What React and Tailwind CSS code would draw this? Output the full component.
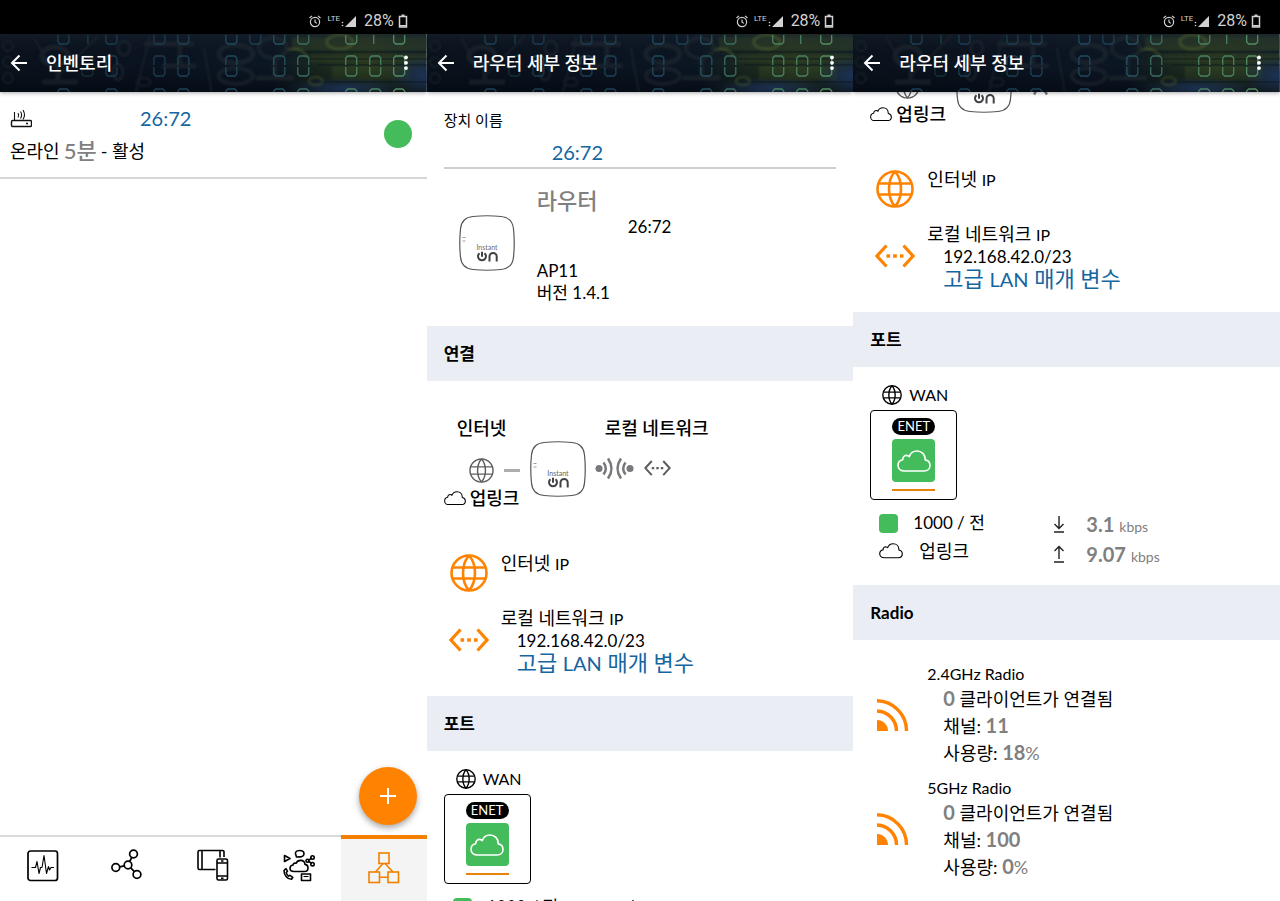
import React, { useLayoutEffect, useRef } from 'react';

const segmentDigits = [
  // x, rows that show a zero in that column
  { x: 57, top: true, mid: false, bottom: true, color: '#1d4256' },
  { x: 81, top: false, mid: true, bottom: false, color: '#162d3a' },
  { x: 105, top: true, mid: true, bottom: true, color: '#1b3d50' },
  { x: 153, top: true, mid: true, bottom: true, color: '#1b3d50' },
  { x: 177, top: true, mid: true, bottom: true, color: '#1d4256' },
  { x: 225, top: true, mid: true, bottom: true, color: '#21495c' },
  { x: 249, top: true, mid: false, bottom: false, color: '#1d4052' },
  { x: 273, top: true, mid: true, bottom: true, color: '#26525f' },
  { x: 297, top: true, mid: true, bottom: true, color: '#3b6c62' },
  { x: 345, top: true, mid: true, bottom: true, color: '#4a8062' },
  { x: 369, top: false, mid: true, bottom: true, color: '#4a8062' },
  { x: 393, top: true, mid: true, bottom: true, color: '#538c63' },
];

const HeaderArt = () => (
  <svg
    className="absolute inset-0 h-full w-full"
    viewBox="0 0 427 58"
    preserveAspectRatio="none"
    fill="none"
    aria-hidden="true"
  >
    <defs>
      <linearGradient id="art-base" x1="0" x2="1" y1="0" y2="0">
        <stop offset="0" stopColor="#0a121c" />
        <stop offset="0.35" stopColor="#0a1320" />
        <stop offset="0.64" stopColor="#0c1724" />
        <stop offset="0.74" stopColor="#1a281f" />
        <stop offset="0.86" stopColor="#27361f" />
        <stop offset="1" stopColor="#1c2a2c" />
      </linearGradient>
      <linearGradient id="art-shade" x1="0" x2="0" y1="0" y2="1">
        <stop offset="0" stopColor="#1a2430" stopOpacity="0.5" />
        <stop offset="0.5" stopColor="#050a12" stopOpacity="0" />
        <stop offset="1" stopColor="#03070f" stopOpacity="0.6" />
      </linearGradient>
      <radialGradient id="art-blue">
        <stop offset="0" stopColor="#1d3560" stopOpacity="0.8" />
        <stop offset="1" stopColor="#1d3560" stopOpacity="0" />
      </radialGradient>
      <filter id="art-soft">
        <feGaussianBlur stdDeviation="0.9" />
      </filter>
    </defs>
    <rect width="427" height="58" fill="url(#art-base)" />
    <g filter="url(#art-soft)">
      <rect x="292" y="3" width="137" height="13" fill="#3c4a24" opacity="0.55" />
      <rect x="310" y="20" width="119" height="8" fill="#35461f" opacity="0.45" />
      <rect x="332" y="32" width="78" height="14" fill="#3f5228" opacity="0.4" />
    </g>
    <rect width="427" height="58" fill="url(#art-shade)" />
    <ellipse cx="345" cy="54" rx="60" ry="11" fill="url(#art-blue)" />
    <ellipse cx="425" cy="42" rx="36" ry="20" fill="url(#art-blue)" />
    <path
      d="M292 18h135M305 25h122M318 31h109M310 48h117"
      stroke="#0b1820"
      strokeWidth="1"
      opacity="0.8"
    />
    <g stroke="#2a3238" opacity="0.42" filter="url(#art-soft)">
      <path d="M34 4l16 28M150 2l-14 56M204 14l8 44M98 2L56 44" strokeWidth="2" />
      <path d="M144 10h50M180 10v22M162 32h34M42 48h36M58 30v18" strokeWidth="5" />
      <ellipse cx="55" cy="22" rx="13" ry="9" strokeWidth="5" />
      <ellipse cx="236" cy="20" rx="17" ry="9" strokeWidth="5" />
      <ellipse cx="236" cy="42" rx="17" ry="8" strokeWidth="4" />
      <ellipse cx="273" cy="14" rx="14" ry="10" strokeWidth="4" />
      <path d="M256 44h38M275 26v18" strokeWidth="5" />
      <ellipse cx="124" cy="14" rx="6" ry="7" strokeWidth="3" />
      <ellipse cx="118" cy="38" rx="5" ry="8" strokeWidth="3" />
      <ellipse cx="8" cy="12" rx="5" ry="5" strokeWidth="2" />
      <ellipse cx="8" cy="28" rx="5" ry="5" strokeWidth="2" />
      <ellipse cx="8" cy="44" rx="5" ry="5" strokeWidth="2" />
      <ellipse cx="144" cy="48" rx="7" ry="4" strokeWidth="2" />
    </g>
    <g stroke="#5f7136" opacity="0.4" filter="url(#art-soft)">
      <ellipse cx="340" cy="8" rx="13" ry="7" strokeWidth="3" />
      <path d="M288 16q14 -4 20 8" strokeWidth="3" />
      <ellipse cx="316" cy="47" rx="7" ry="4" strokeWidth="2" />
    </g>
    <g strokeWidth="1.3">
      {segmentDigits.map((d) => (
        <g key={d.x} stroke={d.color}>
          {d.top && <path d={`M${d.x + 1} 1v7l2 2h7l2 -2v-7`} />}
          {d.mid && (
            <path
              d={`M${d.x + 1} 31v-7l2 -2h7l2 2v7M${d.x + 1} 33v7l2 2h7l2 -2v-7`}
            />
          )}
          {d.bottom && <path d={`M${d.x + 1} 58v-1l2 -2h7l2 2v1`} />}
        </g>
      ))}
      <path d="M88 1v9" stroke="#1b3d50" />
      <path d="M374 1v9" stroke="#4a8062" />
    </g>
  </svg>
);

const AlarmIcon = () => (
  <svg width="12" height="13" viewBox="0 0 12 13" fill="none" stroke="#d2d2d2" strokeWidth="1.2">
    <circle cx="6" cy="7" r="4.6" />
    <path d="M6 4.500V7l1.800 1.400M0.500 3L3 0.900M11.500 3L9 0.900" />
  </svg>
);

const StatusBar = () => (
  <div className="flex h-[34px] shrink-0 items-end bg-black pr-[19px] pb-1 text-[#d2d2d2]">
    <div className="ml-auto flex h-[18px] items-center">
      <AlarmIcon />
      <span className="ml-[6px] self-start font-[Roboto] text-[8px] leading-[13px]">LTE</span>
      <svg width="16" height="13" viewBox="0 0 16 13" fill="#d2d2d2">
        <path d="M16 1v11H5z" />
        <circle cx="2.500" cy="7.500" r="0.800" />
        <circle cx="2.500" cy="10.500" r="0.800" />
      </svg>
      <span className="ml-2 font-[Roboto] text-base leading-[18px]">28%</span>
      <svg className="ml-1" width="10" height="14" viewBox="0 0 10 14" fill="none" stroke="#d2d2d2" strokeWidth="1.500">
        <path d="M1.500 2.500h7v10.500h-7z" />
        <path d="M3.500 1.200h3M2 11.800h6" />
      </svg>
    </div>
  </div>
);

const AppHeader = ({ title }) => (
  <header className="relative z-10 h-[58px] shrink-0 shadow-[0_1px_4px_rgba(0,0,0,0.35)]">
    <HeaderArt />
    <div className="relative flex h-full items-center pl-[10px] pr-4 text-white">
      <button type="button" aria-label="뒤로">
        <svg width="18" height="18" viewBox="0 0 18 18" fill="none" stroke="currentColor" strokeWidth="2">
          <path d="M17 9H2M9.500 1.500L2 9l7.500 7.500" />
        </svg>
      </button>
      <h1 className="ml-[18px] text-lg font-medium">{title}</h1>
      <button type="button" aria-label="메뉴" className="ml-auto">
        <svg width="10" height="18" viewBox="0 0 10 18" fill="currentColor">
          <circle cx="5" cy="3.500" r="1.900" />
          <circle cx="5" cy="8.800" r="1.900" />
          <circle cx="5" cy="14.100" r="1.900" />
        </svg>
      </button>
    </div>
  </header>
);

const Phone = ({ title, scroll = 0, footer, children }) => {
  const bodyRef = useRef(null);

  useLayoutEffect(() => {
    bodyRef.current.scrollTop = scroll;
  }, [scroll]);

  return (
    <section className="flex h-screen min-w-0 flex-col overflow-hidden bg-white">
      <StatusBar />
      <AppHeader title={title} />
      <div
        ref={bodyRef}
        className="relative min-h-0 flex-1 overflow-y-auto [scrollbar-width:none]"
      >
        {children}
      </div>
      {footer}
    </section>
  );
};

const GlobeIcon = ({ size, color, stroke }) => (
  <svg width={size} height={size} viewBox="0 0 38 38" fill="none" stroke={color} strokeWidth={stroke}>
    <circle cx="19" cy="19" r="17.500" />
    <path d="M19 1.500c-8 9-8 26 0 35M19 1.500c8 9 8 26 0 35M3 13.500h32M3 24.500h32" />
  </svg>
);

const CloudIcon = ({ width, color, stroke }) => (
  <svg width={width} viewBox="0 0 34 22" fill="none" stroke={color} strokeWidth={stroke} strokeLinejoin="round">
    <path d="M7.500 21C3.500 21 1 18.500 1 15.300c0-2.900 2-5.200 4.800-5.600C5.500 6.800 8 4.800 10.500 5.600c.8.200 1.300.5 1.800 1C13.500 3 16.500 1 20 1c4.800 0 8.200 3.600 8.200 8.300v.6c2.800.5 4.800 2.700 4.800 5.500 0 3.200-2.500 5.600-5.800 5.600z" />
  </svg>
);

const LanIcon = ({ width, color, stroke }) => (
  <svg width={width} viewBox="0 0 40 24" fill="none" stroke={color} strokeWidth={stroke}>
    <path d="M11.500 1.500L2 12l9.500 10.500M28.500 1.500L38 12l-9.500 10.500" />
    <path d="M11.500 12h17" strokeWidth="3.600" strokeDasharray="3.600 3.100" />
  </svg>
);

const AccessPointIcon = () => (
  <svg width="56" height="56" viewBox="0 0 56 56" fill="none">
    <path
      d="M14 1.500Q28 0 42 1.500Q53.500 2.500 54.500 14Q56 28 54.500 42Q53.500 53.500 42 54.500Q28 56 14 54.500Q2.500 53.500 1.500 42Q0 28 1.500 14Q2.500 2.500 14 1.500Z"
      stroke="#55565a"
      strokeWidth="1.200"
    />
    <path d="M3.500 22.500h3M3.500 26h3" stroke="#a3a093" strokeWidth="1" />
    <text x="28" y="35" textAnchor="middle" fontSize="7" fill="#6c6d70">
      Instant
    </text>
    <g stroke="#414246" strokeWidth="2">
      <path d="M20.500 38.200A4 4 0 1 0 25.500 38.200M23 36.800v5" />
      <path d="M30.500 46.500v-5a3.600 3.600 0 0 1 7.200 0v5" />
    </g>
  </svg>
);

const WirelessLinkIcon = () => (
  <svg width="39" height="23" viewBox="0 0 39 23" fill="none" stroke="#77787b" strokeWidth="2.500">
    <circle cx="4" cy="11.500" r="3.500" fill="#77787b" stroke="none" />
    <path d="M8.500 5.500q4.500 6 0 12M13 1.500q7 10 0 20" />
    <circle cx="35" cy="11.500" r="3.500" fill="#77787b" stroke="none" />
    <path d="M30.500 5.500q-4.500 6 0 12M26 1.500q-7 10 0 20" />
  </svg>
);

const RadioWaveIcon = () => (
  <svg width="34" height="32" viewBox="-2 0 34 32" fill="none" stroke="#ff8300" strokeWidth="3.400">
    <path d="M0 1.800A30 30 0 0 1 29.500 32M0 12A20 20 0 0 1 19.500 32" />
    <path d="M0 21a11 11 0 0 1 11 11H0z" fill="#ff8300" stroke="none" />
  </svg>
);

const SectionTitle = ({ children }) => (
  <h2 className="flex h-[55px] items-center bg-[#eaedf3] pl-[17px] text-[17px] font-bold">
    {children}
  </h2>
);

const DeviceName = () => (
  <div className="px-[17px] pt-4">
    <label htmlFor="device-name" className="block text-[15px] leading-[25px]">
      장치 이름
    </label>
    <input
      id="device-name"
      type="text"
      defaultValue="26:72"
      className="block h-9 w-full border-b-2 border-[#cfcfcf] pt-1 pl-[108px] text-xl text-[#14669f] outline-none"
    />
  </div>
);

const DeviceSummary = () => (
  <div className="flex gap-[22px] pt-[19px] pb-[22px] pl-8">
    <div className="pt-[27px]">
      <AccessPointIcon />
    </div>
    <div className="text-[17px] leading-[22px]">
      <p className="text-[22px] leading-[26px] font-medium text-[#808080]">라우터</p>
      <p className="pl-[91px] leading-[26px]">26:72</p>
      <p className="mt-5">AP11</p>
      <p>버전 1.4.1</p>
    </div>
  </div>
);

const ConnectionDiagram = () => (
  <div className="flex items-start px-[17px] pt-[35px] text-lg leading-6 font-medium">
    <div className="w-[86px]">
      <p className="pl-[13px]">인터넷</p>
      <div className="flex h-[46px] items-center gap-[10px] pt-[15px] pl-[25px]">
        <GlobeIcon size={25} color="#5d5e61" stroke={2.2} />
        <span className="h-[3px] w-4 bg-[#adadad]" />
      </div>
      <p className="flex items-center gap-1">
        <CloudIcon width={22} color="#000" stroke={1.6} />
        업링크
      </p>
    </div>
    <div className="pt-[25px]">
      <AccessPointIcon />
    </div>
    <div className="ml-[9px]">
      <p className="pl-[10px]">로컬 네트워크</p>
      <div className="flex items-center gap-[10px] pt-[17px]">
        <WirelessLinkIcon />
        <LanIcon width={27} color="#5d5e61" stroke={3} />
      </div>
    </div>
  </div>
);

const Addresses = () => (
  <div className="grid grid-cols-[40px_1fr] gap-x-3 pt-[41px] pb-[22px] pl-[22px] text-lg">
    <div className="pt-[3px] pl-px">
      <GlobeIcon size={38} color="#ff8300" stroke={2.6} />
    </div>
    <p className="h-[55px] leading-6">
      인터넷 <span className="text-base leading-none">IP</span>
    </p>
    <div className="self-center">
      <LanIcon width={40} color="#ff8300" stroke={3.2} />
    </div>
    <div className="leading-[22px]">
      <p className="leading-6">
        로컬 네트워크 <span className="text-base leading-none">IP</span>
      </p>
      <p className="pl-4 text-[17px] leading-[22px]">192.168.42.0/23</p>
      <a href="#lan" className="block pl-4 text-[22px] leading-[22px] text-[#14669f]">
        고급 <span className="text-xl leading-none">LAN</span> 매개 변수
      </a>
    </div>
  </div>
);

const TransferArrow = ({ up = false }) => (
  <svg width="12" height="18" viewBox="0 0 12 18" fill="none" stroke="#222" strokeWidth="1.400">
    <path d={up ? 'M6 14V1.500M1.500 6L6 1.500L10.500 6M1 17h10' : 'M6 1v12.500M1.500 9L6 13.500L10.500 9M1 17h10'} />
  </svg>
);

const Rate = ({ value, up }) => (
  <div className="flex h-[30px] items-center gap-[21px]">
    <TransferArrow up={up} />
    <p className="flex items-baseline gap-[5px] leading-none">
      <b className="text-xl leading-none">{value}</b> kbps
    </p>
  </div>
);

const Ports = () => (
  <div className="pb-4">
    <div className="flex items-center gap-[7px] pt-4 pl-[29px] text-base leading-6">
      <GlobeIcon size={20} color="#000" stroke={2.6} />
      WAN
    </div>
    <div className="mt-[3px] ml-[17px] flex h-[90px] w-[87px] flex-col items-center rounded-[4px] border border-black pt-[7px]">
      <span className="flex h-[17px] w-[43px] items-center justify-center rounded-full bg-black text-[13px] text-white">
        ENET
      </span>
      <div className="mt-1 flex h-[43px] w-[43px] items-center justify-center rounded-[4px] bg-[#45bc5b]">
        <CloudIcon width={34} color="#fff" stroke={1.6} />
      </div>
      <span className="mt-[7px] h-[2px] w-[43px] bg-[#e8820c]" />
    </div>
    <div className="mt-[9px] flex pl-[26px]">
      <div className="w-[174px] text-[17px] leading-7">
        <p className="flex items-center gap-[15px]">
          <span className="h-[19px] w-[19px] rounded-[4px] bg-[#45bc5b]" />
          1000 / 전
        </p>
        <p className="flex items-center gap-4 text-lg leading-7">
          <CloudIcon width={24} color="#000" stroke={1.6} />
          업링크
        </p>
      </div>
      <div className="text-sm text-[#808080]">
        <Rate value="3.1" />
        <Rate value="9.07" up />
      </div>
    </div>
  </div>
);

const radios = [
  { name: '2.4GHz Radio', clients: 0, channel: 11, usage: 18 },
  { name: '5GHz Radio', clients: 0, channel: 100, usage: 0 },
];

const Radios = () => (
  <div className="flex flex-col gap-[9px] pt-[22px] pb-8 pl-[22px]">
    {radios.map((radio) => (
      <div key={radio.name} className="grid grid-cols-[40px_1fr] items-center gap-x-3">
        <RadioWaveIcon />
        <div className="text-lg leading-[27px]">
          <p className="text-base leading-6">{radio.name}</p>
          <p className="h-[27px] pl-4">
            <b className="text-xl leading-none text-[#808080]">{radio.clients}</b> 클라이언트가 연결됨
          </p>
          <p className="h-[27px] pl-4">
            채널: <b className="text-xl leading-none text-[#808080]">{radio.channel}</b>
          </p>
          <p className="h-[27px] pl-4 text-[#808080]">
            <span className="text-black">사용량:</span>{' '}
            <b className="text-xl leading-none">{radio.usage}</b>%
          </p>
        </div>
      </div>
    ))}
  </div>
);

const navStroke = { width: 34, height: 34, viewBox: '0 0 34 34', fill: 'none', stroke: 'currentColor' };

const HealthIcon = () => (
  <svg {...navStroke} strokeWidth="1.700">
    <rect x="2" y="2" width="29.500" height="29.500" rx="2.500" />
    <path
      d="M5.500 18.500h4l1.500-6 2 12 1.500-6h1.500l2-12 2.500 18 2-7 1 3.500 1.500-2.500h3"
      strokeWidth="1.100"
      strokeLinejoin="round"
    />
  </svg>
);

const SitesIcon = () => (
  <svg {...navStroke} strokeWidth="1.700">
    <circle cx="17" cy="16" r="3.800" />
    <circle cx="22.500" cy="5" r="3.900" />
    <circle cx="4.800" cy="18.500" r="3.900" />
    <circle cx="26" cy="25.500" r="3.900" />
    <path d="M18.700 12.500l2-4M13.200 16.800l-4.600 1M19.800 18.800l3.500 3.800" />
  </svg>
);

const DevicesIcon = () => (
  <svg {...navStroke} strokeWidth="1.600">
    <path d="M19.500 20.500H3.500a1.500 1.500 0 0 1-1.500-1.500V3a1.500 1.500 0 0 1 1.500-1.500h23A1.500 1.500 0 0 1 28 3v5M6 1.500v19M24 1.500v7" />
    <rect x="21" y="10" width="10.500" height="21" rx="1.500" />
    <path d="M21 14h10.500M21 27h10.500M25 29.200h2.500M25 12h2.500" />
  </svg>
);

const AppsIcon = () => (
  <svg {...navStroke} strokeWidth="1.600" strokeLinejoin="round">
    <path d="M12 22.500c-2.500 0-4-1.400-4-3.300 0-1.800 1.300-3 3-3.200.3-1.700 1.800-2.300 3-1.600 1-2.200 2.600-3 4.500-3 2.500 0 4.300 1.700 4.500 4 2 .2 3 1.700 3 3.500 0 2.100-1.500 3.600-3.600 3.600z" />
    <path d="M2.500 6.500l5.500 3-5.500 3z" />
    <path d="M14.500 8l-.5-1.700C12.500 3.500 14 1.500 17.500 1.500c3 0 4.500 1.500 4.500 3.200 0 2-2 3.300-4.500 3.200z" />
    <path d="M26 11.500l4-2.500M26 12l4 2.500" />
    <circle cx="25.500" cy="11.700" r="1.500" />
    <circle cx="30.500" cy="8.500" r="1.700" />
    <circle cx="30.500" cy="15.200" r="1.700" />
    <path d="M2 21.500c0 5 3.500 8.800 7.500 8.800l1.300-2-2.800-2-1.500.8c-1.200-.8-2-2-2.200-3.600l1.200-1.200-1.500-2.600z" />
    <rect x="19.500" y="25" width="9" height="6.500" />
    <path d="M21.500 27.500h5" strokeWidth="1.100" />
  </svg>
);

const InventoryIcon = () => (
  <svg {...navStroke} strokeWidth="1.600">
    <rect x="12" y="3" width="10" height="10.500" />
    <rect x="2" y="22" width="10.500" height="10.500" />
    <rect x="21" y="22" width="10.500" height="10.500" />
    <path d="M16 13.500L8.500 22M18 13.500L26 22M12.500 27.200H21" />
  </svg>
);

const navItems = [
  { label: '상태', Icon: HealthIcon },
  { label: '네트워크', Icon: SitesIcon },
  { label: '클라이언트', Icon: DevicesIcon },
  { label: '애플리케이션', Icon: AppsIcon },
  { label: '인벤토리', Icon: InventoryIcon, active: true },
];

const BottomNav = () => (
  <nav className="grid h-[66px] shrink-0 grid-cols-5">
    {navItems.map(({ label, Icon, active }) => (
      <button
        key={label}
        type="button"
        aria-label={label}
        className={
          active
            ? 'flex items-start justify-center border-t-4 border-[#f57f00] bg-[#f4f4f4] pt-[11px] text-[#f08000]'
            : 'flex items-start justify-center border-t-2 border-[#d9d9d9] pt-3 text-black'
        }
      >
        <Icon />
      </button>
    ))}
  </nav>
);

const InventoryItem = () => (
  <div className="flex items-center border-b-2 border-[#d6d6d6] pt-[11px] pr-[15px] pb-3 pl-[10px]">
    <div className="text-lg leading-7">
      <div className="flex h-[30px] items-center">
        <svg width="22" height="20" viewBox="0 0 22 20" fill="none" stroke="#111" strokeWidth="1.400">
          <rect x="1.500" y="12.500" width="20" height="6" rx="1.200" />
          <path d="M4.500 12.500V4M8 5q1.500 2 0 4.500M10.500 3.500q2.200 3.500 0 7M13 2q3 5 0 9.500" strokeWidth="1.100" />
          <path d="M16 15.500h2" />
        </svg>
        <a href="#device" className="ml-[108px] text-xl leading-[30px] text-[#14669f]">26:72</a>
      </div>
      <p className="mt-1 flex h-7 items-center gap-1">
        온라인 <span className="text-[22px] font-medium text-[#808080]">5분</span> - 활성
      </p>
    </div>
    <span className="ml-auto h-7 w-7 rounded-full bg-[#45bc5b]" />
  </div>
);

const App = () => (
  <div className="grid grid-cols-3 bg-white font-['Lato','Noto_Sans_CJK_KR',sans-serif] text-black">
    <Phone title="인벤토리" footer={<BottomNav />}>
      <InventoryItem />
      <button
        type="button"
        aria-label="추가"
        className="absolute right-[10px] bottom-[10px] flex h-[58px] w-[58px] items-center justify-center rounded-full bg-[#ff8300] text-white shadow-[0_3px_6px_rgba(0,0,0,0.35)]"
      >
        <svg width="16" height="16" viewBox="0 0 16 16" fill="none" stroke="currentColor" strokeWidth="2">
          <path d="M8 0v16M0 8h16" />
        </svg>
      </button>
    </Phone>
    <Phone title="라우터 세부 정보">
      <DeviceName />
      <DeviceSummary />
      <SectionTitle>연결</SectionTitle>
      <ConnectionDiagram />
      <Addresses />
      <SectionTitle>포트</SectionTitle>
      <Ports />
    </Phone>
    <Phone title="라우터 세부 정보" scroll={95}>
      <ConnectionDiagram />
      <Addresses />
      <SectionTitle>포트</SectionTitle>
      <Ports />
      <SectionTitle>Radio</SectionTitle>
      <Radios />
    </Phone>
  </div>
);

export default App;
